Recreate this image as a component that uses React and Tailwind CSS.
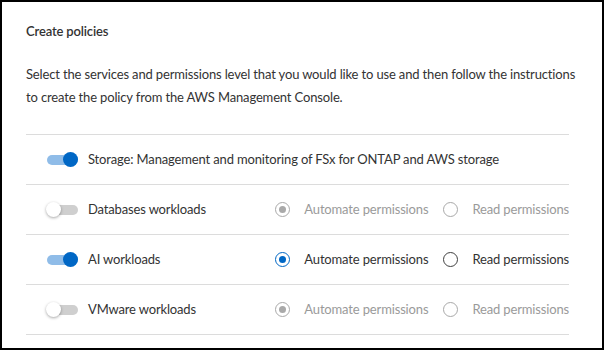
import { useState } from 'react';

const rows = [
  { id: 'storage', label: 'Storage: Management and monitoring of FSx for ONTAP and AWS storage', on: true, radios: false },
  { id: 'db', label: 'Databases workloads', on: false, radios: true },
  { id: 'ai', label: 'AI workloads', on: true, radios: true },
  { id: 'vmware', label: 'VMware workloads', on: false, radios: true },
];

function Toggle({ on, onClick }) {
  return (
    <button onClick={onClick} className="relative flex items-center w-[32px] h-[20px] shrink-0">
      <span className={`absolute left-[1px] right-0 h-[10px] rounded-full ${on ? 'bg-[#8fbce8]' : 'bg-[#cfcfcf]'}`} />
      <span
        className={`absolute w-[15px] h-[15px] rounded-full ${on ? 'right-0 bg-[#0067c5]' : 'left-0 bg-white shadow-[0_1px_3px_rgba(0,0,0,0.35)]'}`}
      />
    </button>
  );
}

function Radio({ checked, disabled, label }) {
  const ring = disabled ? 'border-[#a9a9a9]' : checked ? 'border-[#0067c5]' : 'border-[#404040]';
  const dot = disabled ? 'bg-[#a9a9a9]' : 'bg-[#0067c5]';
  return (
    <label className="flex items-center gap-[14px]">
      <span className={`flex items-center justify-center w-[15px] h-[15px] rounded-full border-[1.5px] ${ring}`}>
        {checked && <span className={`w-[7px] h-[7px] rounded-full ${dot}`} />}
      </span>
      <span className={disabled ? 'text-[#9a9a9a]' : 'text-[#333]'}>{label}</span>
    </label>
  );
}

export default function App() {
  const [state, setState] = useState(rows.map((r) => r.on));

  return (
    <div className="w-[604px] h-[350px] bg-white border-2 border-black font-['Lato',sans-serif] text-[13px] tracking-[-0.15px] text-[#333] px-[24px] pt-[19px]">
      <h2 className="font-semibold leading-[20px]">Create policies</h2>
      <p className="mt-[22px] leading-[23px] whitespace-nowrap">
        Select the services and permissions level that you would like to use and then follow the instructions
        <br />
        to create the policy from the AWS Management Console.
      </p>
      <div className="mt-[25px] w-[543px] border-t border-[#dcdcdc]">
        {rows.map((r, i) => (
          <div key={r.id} className="flex items-center h-[50px] border-b border-[#dcdcdc] pl-[20px]">
            <Toggle on={state[i]} onClick={() => setState(state.map((v, j) => (j === i ? !v : v)))} />
            <span className="ml-[10px] flex-1">{r.label}</span>
            {r.radios && (
              <div className="flex items-center gap-[15px]">
                <Radio checked disabled={!state[i]} label="Automate permissions" />
                <Radio checked={false} disabled={!state[i]} label="Read permissions" />
              </div>
            )}
          </div>
        ))}
      </div>
    </div>
  );
}
